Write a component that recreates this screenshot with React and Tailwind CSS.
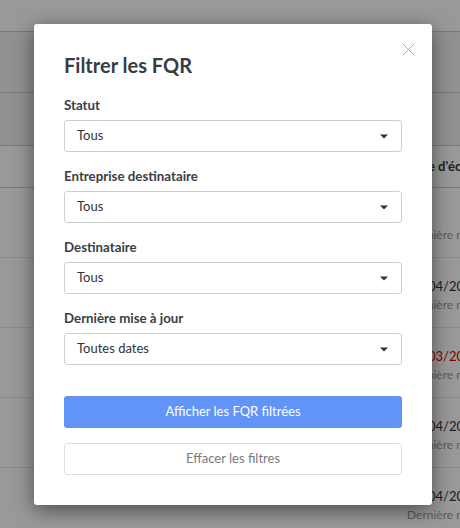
import React from "react";

const rows = [
  { date: "–", red: false },
  { date: "12/04/2023", red: false },
  { date: "28/03/2023", red: true },
  { date: "11/04/2023", red: false },
  { date: "05/04/2023", red: false },
];

const filters = [
  { label: "Statut", value: "Tous" },
  { label: "Entreprise destinataire", value: "Tous" },
  { label: "Destinataire", value: "Tous" },
  { label: "Dernière mise à jour", value: "Toutes dates" },
];

const Caret = () => (
  <svg width="8" height="5" viewBox="0 0 8 5" className="shrink-0">
    <polygon points="0,0.5 8,0.5 4,4.5" fill="#333" />
  </svg>
);

const SelectBox = ({ label, value }) => (
  <div className="flex flex-col">
    <label className="mb-[5px] text-[13.3px] font-bold leading-[20px] text-[#3a3e45]">{label}</label>
    <div className="flex h-[32px] items-center justify-between rounded-[3px] border border-[#cfcfcf] bg-white pl-[12px] pr-[13px] text-[13px] text-[#333]">
      <span>{value}</span>
      <Caret />
    </div>
  </div>
);

export default function App() {
  return (
    <div className="relative h-[528px] w-[460px] overflow-hidden bg-white font-['Lato','Open_Sans',sans-serif]">
      {/* page behind the modal */}
      <div className="h-[32px] border-b border-[#cbcbcb]" />
      <div className="bg-[#eef3f1]">
        <div className="h-[61px] border-b border-[#cbcbcb]" />
        <div className="h-[53px] border-b border-[#cbcbcb]" />
      </div>
      <div className="grid h-[42px] grid-cols-[407px_1fr] items-center border-b border-[#cbcbcb]">
        <div />
        <div className="whitespace-nowrap text-[13px] font-bold text-[#333]">Date d'échéance</div>
      </div>
      {rows.map((r, i) => (
        <div key={i} className="grid h-[70px] grid-cols-[407px_1fr] border-b border-[#e6e6e6] pt-[18px]">
          <div />
          <div className="whitespace-nowrap">
            <div className={`text-[13px] leading-[20px] ${r.red ? "text-[#e00000]" : "text-[#333]"}`}>{r.date}</div>
            <div className="text-[12px] leading-[18px] text-[#999]">Dernière mise à jour</div>
          </div>
        </div>
      ))}

      {/* overlay */}
      <div className="absolute inset-0 bg-black/40" />

      {/* modal */}
      <div className="absolute left-[34px] top-[24px] w-[398px] rounded-[3px] bg-white px-[30px] pb-[30px] pt-[27px] shadow-[0_5px_20px_rgba(0,0,0,0.5)]">
        <button className="absolute right-[17px] top-[19px]" aria-label="Fermer">
          <svg width="13" height="13" viewBox="0 0 13 13">
            <path d="M0.5 0.5 L12.5 12.5 M12.5 0.5 L0.5 12.5" stroke="#b0b0b0" strokeWidth="1" />
          </svg>
        </button>
        <h2 className="text-[20px] font-bold leading-[28px] text-[#383d45]">Filtrer les FQR</h2>
        <div className="mt-[16px] flex flex-col gap-[14px]">
          {filters.map((f) => (
            <SelectBox key={f.label} label={f.label} value={f.value} />
          ))}
        </div>
        <button className="mt-[31px] flex h-[32px] w-full items-center justify-center rounded-[3px] bg-[#6294f8] text-[13px] text-white">
          Afficher les FQR filtrées
        </button>
        <button className="mt-[15px] flex h-[32px] w-full items-center justify-center rounded-[3px] border border-[#dedede] bg-white text-[13px] text-[#7a7a7a]">
          Effacer les filtres
        </button>
      </div>
    </div>
  );
}
